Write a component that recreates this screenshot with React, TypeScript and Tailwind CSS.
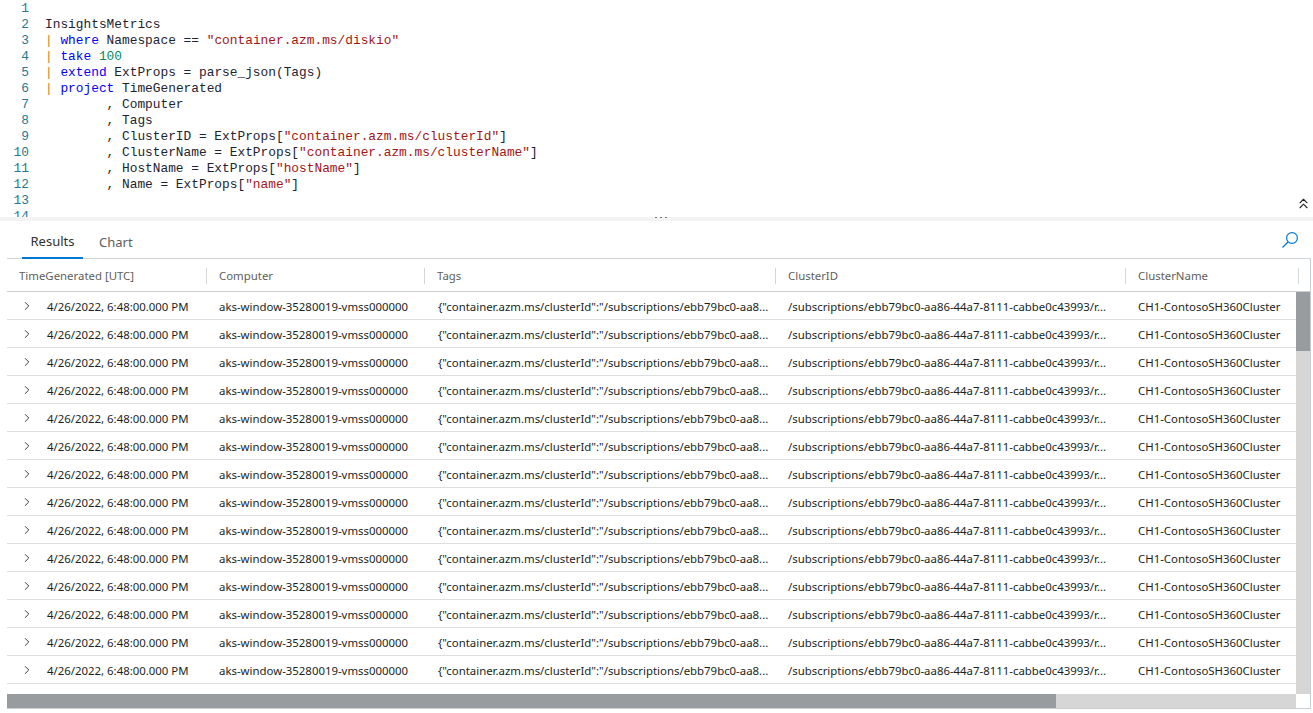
import { ChevronRight, ChevronsUp } from "lucide-react";
import type { ReactNode } from "react";

const Kw = ({ children }: { children: ReactNode }) => <span className="text-[#0000ff]">{children}</span>;
const Str = ({ children }: { children: ReactNode }) => <span className="text-[#a31515]">{children}</span>;
const Pipe = () => <span className="text-[#c5821f]">|</span>;

const codeLines: ReactNode[] = [
  "",
  "InsightsMetrics",
  <><Pipe /> <Kw>where</Kw> Namespace == <Str>"container.azm.ms/diskio"</Str></>,
  <><Pipe /> <Kw>take</Kw> <span className="text-[#09885a]">100</span></>,
  <><Pipe /> <Kw>extend</Kw> ExtProps = parse_json(Tags)</>,
  <><Pipe /> <Kw>project</Kw> TimeGenerated</>,
  "        , Computer",
  "        , Tags",
  <>        , ClusterID = ExtProps[<Str>"container.azm.ms/clusterId"</Str>]</>,
  <>        , ClusterName = ExtProps[<Str>"container.azm.ms/clusterName"</Str>]</>,
  <>        , HostName = ExtProps[<Str>"hostName"</Str>]</>,
  <>        , Name = ExtProps[<Str>"name"</Str>]</>,
  "",
  "",
];

const columns = [
  { name: "TimeGenerated [UTC]", width: "w-[200px]" },
  { name: "Computer", width: "w-[218px]" },
  { name: "Tags", width: "w-[351px]" },
  { name: "ClusterID", width: "w-[350px]" },
  { name: "ClusterName", width: "w-[173px]" },
];

const rows = Array.from({ length: 14 }, (_, i) => i);

export default function App() {
  return (
    <div className="flex h-[713px] w-[1313px] flex-col overflow-hidden bg-white font-['Noto_Sans',sans-serif]">
      {/* query editor */}
      <div className="relative h-[217px] shrink-0 overflow-hidden pt-[1px] font-['Liberation_Mono',monospace] text-[12.83px] leading-4 text-[#1c2433]">
        {codeLines.map((line, i) => (
          <div key={i} className="flex h-4 whitespace-pre">
            <span className="w-[29px] shrink-0 text-right text-[#237893]">{i + 1}</span>
            <span className="ml-4">{line}</span>
          </div>
        ))}
        <ChevronsUp className="absolute right-[1px] top-[195px] text-[#222]" size={17} strokeWidth={1.5} />
      </div>

      {/* splitter */}
      <div className="flex h-1 shrink-0 justify-center bg-[#f3f3f3] pl-[8px]">
        <div className="flex gap-[3px]">
          <span className="h-[1px] w-[2px] bg-[#777]" />
          <span className="h-[1px] w-[2px] bg-[#777]" />
          <span className="h-[1px] w-[2px] bg-[#777]" />
        </div>
      </div>

      {/* results */}
      <div className="ml-[7px] mr-[2px] flex min-h-0 flex-1 flex-col pb-[4px]">
        <div className="flex h-[38px] shrink-0 items-end justify-between border-b border-[#d3d6d9] pl-[15px] pr-[12px]">
          <div className="flex text-[13px] text-[#605e5c]">
            <div className="-mb-px flex h-[37px] w-[61px] items-center justify-center border-b-2 border-[#0078d4] pt-[5px] text-[#323130]">
              Results
            </div>
            <div className="ml-4 flex h-[36px] items-center pt-[5px]">Chart</div>
          </div>
          <svg className="mb-[9px]" width="18" height="18" viewBox="0 0 18 18" fill="none" stroke="#0078d4" strokeWidth="1.2">
            <circle cx="11" cy="7" r="5.4" />
            <path d="M7 11 L1.5 16.5" />
          </svg>
        </div>

        <div className="flex h-[33px] shrink-0 items-center border-b border-r border-b-[#c8cdd1] border-r-[#c8cdd1] pt-[1px] text-[11.4px] text-[#605e5c]">
          {columns.map((c) => (
            <div key={c.name} className={`${c.width} flex h-4 shrink-0 items-center border-r border-[#d5d8da] pl-3`}>
              {c.name}
            </div>
          ))}
        </div>

        <div className="flex min-h-0 flex-1 border-r border-[#c8cdd1]">
          <div className="flex min-w-0 flex-1 flex-col">
            {rows.map((r) => (
              <div key={r} className="flex h-[28px] shrink-0 items-center border-b border-[#dcdee0] pt-[3px] text-[11.4px] text-[#201f1e]">
                <div className="flex w-[200px] shrink-0 items-center pl-[13px]">
                  <ChevronRight size={14} strokeWidth={1.5} className="-mt-[2px] text-[#222]" />
                  <span className="ml-[13px]">4/26/2022, 6:48:00.000 PM</span>
                </div>
                <div className="w-[218px] shrink-0 pl-3">aks-window-35280019-vmss000000</div>
                <div className="w-[351px] shrink-0 whitespace-nowrap pl-[13px]">
                  {'{"container.azm.ms/clusterId":"/subscriptions/ebb79bc0-aa8...'}
                </div>
                <div className="w-[349px] shrink-0 whitespace-nowrap pl-3">
                  /subscriptions/ebb79bc0-aa86-44a7-8111-cabbe0c43993/r...
                </div>
                <div className="w-[171px] shrink-0 whitespace-nowrap pl-[13px]">CH1-ContosoSH360Cluster</div>
              </div>
            ))}
          </div>
          <div className="flex w-[14px] shrink-0 flex-col bg-[#d6d6d6]">
            <div className="h-[59px] bg-[#999c9e]" />
          </div>
        </div>

        <div className="flex h-[15px] shrink-0 border-b border-r border-[#c8cdd1]">
          <div className="flex flex-1 bg-[#d6d6d6]">
            <div className="w-[1049px] bg-[#999c9e]" />
          </div>
          <div className="w-[14px] shrink-0 bg-white" />
        </div>
      </div>
    </div>
  );
}
